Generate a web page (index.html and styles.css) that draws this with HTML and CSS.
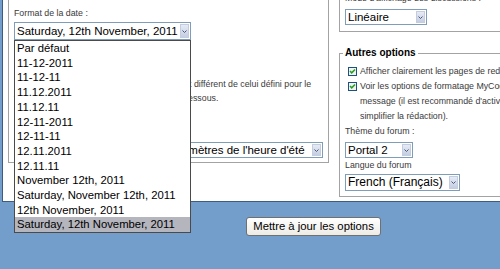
FILE: index.html
```html
<!DOCTYPE html>
<html lang="fr">
<head>
<meta charset="UTF-8" />
<meta name="viewport" content="width=device-width, initial-scale=1.0">
<title>Options</title>
<link rel="stylesheet" href="styles.css">
</head>
<body>
<div class="page">

  <div class="panel">
    <div class="col-left">
      <fieldset class="box box-date">
        <div class="field-label">Format de la date :</div>
        <div class="select select-date">
          <span class="select-text">Saturday, 12th November, 2011</span>
          <span class="select-arrow"><svg width="5" height="3" viewBox="0 0 5 3"><path d="M0.5 0.5 L2.5 2.5 L4.5 0.5" fill="none" stroke="#4b5873" stroke-width="1"/></svg></span>
        </div>
        <div class="field-label gap">Format de l'heure :</div>
        <div class="select select-time">
          <span class="select-text">Par défaut</span>
          <span class="select-arrow"><svg width="5" height="3" viewBox="0 0 5 3"><path d="M0.5 0.5 L2.5 2.5 L4.5 0.5" fill="none" stroke="#4b5873" stroke-width="1"/></svg></span>
        </div>
        <p class="note">Si le fuseau horaire dans lequel vous êtes est différent de celui défini pour le forum, vous pouvez alors le sélectionner ci-dessous.</p>
        <div class="select select-zone">
          <span class="select-text">(GMT +1:00) Paris</span>
          <span class="select-arrow"><svg width="5" height="3" viewBox="0 0 5 3"><path d="M0.5 0.5 L2.5 2.5 L4.5 0.5" fill="none" stroke="#4b5873" stroke-width="1"/></svg></span>
        </div>
        <div class="field-label gap">Heure d'été :</div>
        <div class="select select-dst">
          <span class="select-text">Utiliser automatiquement les paramètres de l'heure d'été</span>
          <span class="select-arrow"><svg width="5" height="3" viewBox="0 0 5 3"><path d="M0.5 0.5 L2.5 2.5 L4.5 0.5" fill="none" stroke="#4b5873" stroke-width="1"/></svg></span>
        </div>
      </fieldset>
    </div>

    <div class="col-right">
      <fieldset class="box box-view">
        <div class="field-label">Mode d'affichage des discussions :</div>
        <div class="select select-mode">
          <span class="select-text">Linéaire</span>
          <span class="select-arrow"><svg width="5" height="3" viewBox="0 0 5 3"><path d="M0.5 0.5 L2.5 2.5 L4.5 0.5" fill="none" stroke="#4b5873" stroke-width="1"/></svg></span>
        </div>
      </fieldset>

      <fieldset class="box box-other">
        <legend>Autres options</legend>
        <div class="check-row">
          <svg class="check" width="9" height="9" viewBox="0 0 9 9"><rect x="0.5" y="0.5" width="8" height="8" fill="#f2f2ee" stroke="#1c5180"/><path d="M2 4 L3.7 5.8 L7 2.4" fill="none" stroke="#21a121" stroke-width="1.5"/></svg>
          <span class="check-text">Afficher clairement les pages de redirection</span>
        </div>
        <div class="check-row">
          <svg class="check" width="9" height="9" viewBox="0 0 9 9"><rect x="0.5" y="0.5" width="8" height="8" fill="#f2f2ee" stroke="#1c5180"/><path d="M2 4 L3.7 5.8 L7 2.4" fill="none" stroke="#21a121" stroke-width="1.5"/></svg>
          <span class="check-text">Voir les options de formatage MyCode dans la fenêtre de message (il est recommandé d'activer ces options pour simplifier la rédaction).</span>
        </div>
        <div class="field-label small-gap">Thème du forum :</div>
        <div class="select select-theme">
          <span class="select-text">Portal 2</span>
          <span class="select-arrow"><svg width="5" height="3" viewBox="0 0 5 3"><path d="M0.5 0.5 L2.5 2.5 L4.5 0.5" fill="none" stroke="#4b5873" stroke-width="1"/></svg></span>
        </div>
        <div class="field-label small-gap">Langue du forum</div>
        <div class="select select-lang">
          <span class="select-text">French (Français)</span>
          <span class="select-arrow"><svg width="5" height="3" viewBox="0 0 5 3"><path d="M0.5 0.5 L2.5 2.5 L4.5 0.5" fill="none" stroke="#4b5873" stroke-width="1"/></svg></span>
        </div>
      </fieldset>
    </div>
  </div>

  <div class="footer">
    <button class="submit">Mettre à jour les options</button>
  </div>

  <!-- open date format list -->
  <ul class="dropdown">
    <li>Par défaut</li>
    <li>11-12-2011</li>
    <li>11-12-11</li>
    <li>11.12.2011</li>
    <li>11.12.11</li>
    <li>12-11-2011</li>
    <li>12-11-11</li>
    <li>12.11.2011</li>
    <li>12.11.11</li>
    <li>November 12th, 2011</li>
    <li>Saturday, November 12th, 2011</li>
    <li>12th November, 2011</li>
    <li class="selected">Saturday, 12th November, 2011</li>
  </ul>

</div>
</body>
</html>
```

FILE: styles.css
```css
html, body {
  margin: 0;
  padding: 0;
  overflow: hidden;
}

body {
  background: #739ecb;
  font-family: 'Liberation Sans', Arial, sans-serif;
  color: #333;
  width: 500px;
  height: 269px;
}

.page {
  position: relative;
  height: 269px;
}

.panel {
  display: flex;
  margin-left: 2px;
  height: 201px;
  background: #fff;
  border-left: 1px solid #3e5b80;
  border-bottom: 1px solid #3e5b80;
  overflow: hidden;
}

/* fieldsets */
.box {
  margin: 0;
  border: 1px solid #a3a3a3;
  min-width: 0;
}

.col-left {
  flex: none;
  width: 326px;
}

.box-date {
  margin-left: 5px;
  width: 321px;
  box-sizing: border-box;
  border-top: 0;
  padding: 8px 5px 4px 5px;
}

.col-right {
  flex: none;
  width: 250px;
  margin-left: 10px;
  margin-top: -7px;
}

.box-view {
  border-top: 0;
  border-right: 0;
  padding: 0 5px 6px 5px;
}

.box-other {
  margin-top: 15px;
  border-right: 0;
  padding: 5px 5px 5px 5px;
}

.box-other legend {
  font-size: 10px;
  line-height: 12px;
  font-weight: bold;
  color: #000;
  padding: 0 2px;
  margin-left: -2px;
}

.field-label {
  font-size: 8.8px;
  line-height: 11px;
  color: #3a3a3a;
  white-space: nowrap;
}

.field-label.gap {
  margin-top: 4px;
}

.field-label.small-gap {
  margin-top: 2px;
}

.note {
  margin: 1px 0 0 0;
  width: 310px;
  font-size: 8.8px;
  line-height: 14px;
  color: #3a3a3a;
}

/* select boxes */
.select {
  display: flex;
  box-sizing: border-box;
  border: 1px solid #7f9db9;
  background: #fff;
  color: #000;
  margin-top: 3px;
}

.select-text {
  flex: 1;
  min-width: 0;
  overflow: hidden;
  white-space: nowrap;
  padding-left: 2px;
  font-size: 11.5px;
  line-height: 14px;
}

.select-arrow {
  flex: none;
  width: 9px;
  margin: 1px;
  box-sizing: border-box;
  border: 1px solid #c3cddf;
  background: linear-gradient(#e6ebf5, #c4cee2);
  display: flex;
  align-items: center;
  justify-content: center;
}

.select-date {
  width: 177px;
  height: 18px;
}

.select-date .select-text {
  line-height: 16px;
}

.select-time {
  width: 177px;
  height: 18px;
}

.select-zone {
  width: 170px;
  height: 16px;
}

.select-dst {
  width: 309px;
  height: 16px;
}

.select-mode {
  width: 82px;
  height: 16px;
  margin-top: 5px;
}

.select-theme {
  width: 68px;
  height: 16px;
  margin-top: 5px;
}

.select-lang {
  width: 115px;
  height: 17px;
  margin-top: 3px;
}

.select-lang .select-text {
  font-size: 12px;
  line-height: 15px;
}

/* checkboxes */
.check-row {
  display: flex;
  align-items: flex-start;
}

.check {
  flex: none;
  margin: 3px 0 0 3px;
}

.check-text {
  margin-left: 3px;
  width: 238px;
  font-size: 8.8px;
  line-height: 15px;
  color: #3a3a3a;
}

/* bottom button */
.footer {
  padding: 14px 0 0 246px;
}

.submit {
  width: 135px;
  height: 19px;
  padding: 0;
  border: 1px solid #707070;
  border-radius: 3px;
  background: linear-gradient(#ffffff, #ecebe6);
  font-family: 'Liberation Sans', Arial, sans-serif;
  font-size: 11.3px;
  color: #000;
}

/* open dropdown list */
.dropdown {
  position: absolute;
  left: 14px;
  top: 40px;
  width: 177px;
  box-sizing: border-box;
  margin: 0;
  padding: 0;
  list-style: none;
  background: #fff;
  border: 1px solid #4a4a4a;
}

.dropdown li {
  padding-left: 2px;
  font-size: 11.3px;
  line-height: 14.7px;
  color: #000;
  white-space: nowrap;
}

.dropdown li.selected {
  background: #b4b5bd;
}
```
